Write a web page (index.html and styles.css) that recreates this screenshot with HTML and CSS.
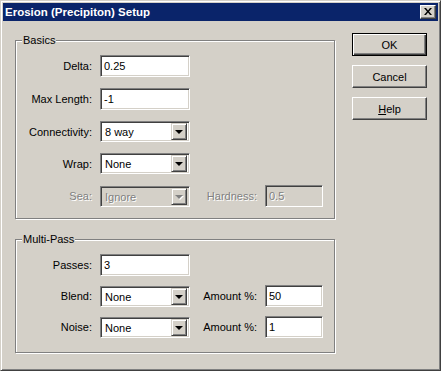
FILE: index.html
```html
<!DOCTYPE html>
<html lang="en">
  <head>
    <meta charset="UTF-8" />
    <title>Erosion (Precipiton) Setup</title>
    <link rel="stylesheet" href="styles.css">
  </head>
  <body>
    <div class="dialog">
      <div class="titlebar">
        <span class="title">Erosion (Precipiton) Setup</span>
        <span class="close">
          <svg width="8" height="7" viewBox="0 0 8 7"><path d="M0 0h2l2 2.5L6 0h2L5 3.5 8 7H6L4 4.5 2 7H0l3-3.5z" fill="#000"/></svg>
        </span>
      </div>

      <div class="content">
        <div class="groups">
          <div class="group basics">
            <span class="group-title">Basics</span>
            <div class="row">
              <label class="lbl">Delta:</label>
              <div class="field">0.25</div>
            </div>
            <div class="row">
              <label class="lbl">Max Length:</label>
              <div class="field">-1</div>
            </div>
            <div class="row">
              <label class="lbl">Connectivity:</label>
              <div class="combo"><span class="value">8 way</span><span class="drop"><i class="arrow"></i></span></div>
            </div>
            <div class="row">
              <label class="lbl">Wrap:</label>
              <div class="combo"><span class="value">None</span><span class="drop"><i class="arrow"></i></span></div>
            </div>
            <div class="row disabled">
              <label class="lbl">Sea:</label>
              <div class="combo"><span class="value">Ignore</span><span class="drop"><i class="arrow"></i></span></div>
              <label class="lbl2">Hardness:</label>
              <div class="field small">0.5</div>
            </div>
          </div>

          <div class="group multi">
            <span class="group-title">Multi-Pass</span>
            <div class="row">
              <label class="lbl">Passes:</label>
              <div class="field">3</div>
            </div>
            <div class="row">
              <label class="lbl">Blend:</label>
              <div class="combo"><span class="value">None</span><span class="drop"><i class="arrow"></i></span></div>
              <label class="lbl2">Amount %:</label>
              <div class="field small">50</div>
            </div>
            <div class="row">
              <label class="lbl">Noise:</label>
              <div class="combo"><span class="value">None</span><span class="drop"><i class="arrow"></i></span></div>
              <label class="lbl2">Amount %:</label>
              <div class="field small">1</div>
            </div>
          </div>
        </div>

        <div class="buttons">
          <button class="btn default">OK</button>
          <button class="btn">Cancel</button>
          <button class="btn"><u>H</u>elp</button>
        </div>
      </div>
    </div>
  </body>
</html>
```

FILE: styles.css
```css
body {
  margin: 0;
  background: #d4d0c8;
  font-family: "Liberation Sans", Arial, sans-serif;
  font-size: 11px;
  color: #000;
}
.dialog {
  width: 441px;
  height: 371px;
  box-sizing: border-box;
  background: #d4d0c8;
  border: 1px solid;
  border-color: #d4d0c8 #404040 #404040 #d4d0c8;
  box-shadow: inset 1px 1px 0 #fff, inset -1px -1px 0 #808080;
  padding: 2px;
}
.titlebar {
  height: 18px;
  background: #0a246a;
  display: flex;
  align-items: center;
  justify-content: space-between;
  padding: 0 2px 0 2px;
}
.title {
  color: #fff;
  font-weight: bold;
  font-size: 11.5px;
}
.close {
  width: 16px;
  height: 14px;
  box-sizing: border-box;
  background: #d4d0c8;
  border: 1px solid;
  border-color: #fff #404040 #404040 #fff;
  box-shadow: inset -1px -1px 0 #808080;
  display: flex;
  align-items: center;
  justify-content: center;
}
.close svg {
  display: block;
  margin: 0 1px 1px 0;
}
.content {
  display: flex;
  padding: 12px 0 0 12px;
}
.groups {
  margin-top: 7px;
  width: 321px;
}
.group {
  position: relative;
  box-sizing: border-box;
  width: 320px;
  border: 1px solid #808080;
  box-shadow: inset 1px 1px 0 #fff, 1px 1px 0 #fff;
  display: flex;
  flex-direction: column;
  padding-top: 14px;
}
.basics {
  height: 179px;
  gap: 11px;
}
.multi {
  margin-top: 20px;
  height: 114px;
  gap: 9px;
}
.group-title {
  position: absolute;
  top: -7px;
  left: 6px;
  padding: 0 1px;
  background: #d4d0c8;
  line-height: 13px;
}
.row {
  display: flex;
  align-items: center;
}
.lbl {
  width: 76px;
  margin-right: 8px;
  text-align: right;
}
.lbl2 {
  width: 67px;
  margin-right: 8px;
  text-align: right;
}
.field,
.combo {
  box-sizing: border-box;
  width: 90px;
  height: 22px;
  background: #fff;
  color: #000;
  border: 1px solid;
  border-color: #808080 #fff #fff #808080;
  box-shadow: inset 1px 1px 0 #404040, inset -1px -1px 0 #d4d0c8;
  padding: 2px 3px;
  line-height: 16px;
}
.field.small {
  width: 58px;
}
.combo {
  height: 21px;
  display: flex;
  align-items: center;
  justify-content: space-between;
  padding: 2px;
}
.combo .value {
  padding-left: 2px;
  padding-top: 1px;
}
.drop {
  width: 16px;
  height: 17px;
  box-sizing: border-box;
  background: #d4d0c8;
  border: 1px solid;
  border-color: #d4d0c8 #404040 #404040 #d4d0c8;
  box-shadow: inset 1px 1px 0 #fff, inset -1px -1px 0 #808080;
  display: flex;
  align-items: center;
  justify-content: center;
}
.arrow {
  width: 0;
  height: 0;
  border-left: 4px solid transparent;
  border-right: 4px solid transparent;
  border-top: 4px solid #000;
  margin-top: 1px;
}
.disabled .lbl,
.disabled .lbl2,
.disabled .value,
.disabled .field {
  color: #808080;
  text-shadow: 1px 1px 0 #fff;
}
.disabled .combo,
.disabled .field {
  background: #d4d0c8;
}
.disabled .arrow {
  border-top-color: #808080;
  filter: drop-shadow(1px 1px 0 #fff);
}
.buttons {
  margin-left: 16px;
  display: flex;
  flex-direction: column;
  gap: 9px;
}
.btn {
  width: 75px;
  height: 23px;
  box-sizing: border-box;
  background: #d4d0c8;
  font-family: "Liberation Sans", Arial, sans-serif;
  font-size: 11px;
  color: #000;
  border: 1px solid;
  border-color: #fff #404040 #404040 #fff;
  box-shadow: inset -1px -1px 0 #808080;
  padding: 0;
}
.btn.default {
  border: 1px solid #000;
  box-shadow: inset 1px 1px 0 #fff, inset -1px -1px 0 #404040, inset -2px -2px 0 #808080;
}
```
